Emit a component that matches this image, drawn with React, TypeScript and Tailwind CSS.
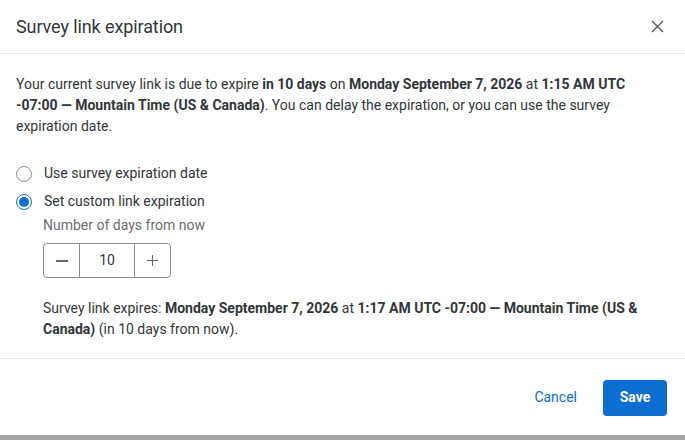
import React, { useState } from "react";

export default function App() {
  const [mode, setMode] = useState<"survey" | "custom">("custom");
  const [days, setDays] = useState(10);

  return (
    <div
      className="w-[685px] h-[440px] bg-white flex flex-col text-[#32363a]"
      style={{ fontFamily: "Roboto, 'Liberation Sans', sans-serif" }}
    >
      {/* Header */}
      <div className="h-[54px] shrink-0 flex items-center justify-between pl-4 pr-[20px] border-b border-[#e6e6e6]">
        <h2 className="text-[18px] text-[#32363a] font-normal tracking-[-0.1px]">Survey link expiration</h2>
        <button className="w-4 h-4 flex items-center justify-center text-[#555]">
          <svg width="13" height="13" viewBox="0 0 13 13" fill="none">
            <path d="M1 1L12 12M12 1L1 12" stroke="currentColor" strokeWidth="1.3" />
          </svg>
        </button>
      </div>

      {/* Body */}
      <div className="flex-1 px-4 pt-[20px] text-[14px] leading-[21px]">
        <p>
          Your current survey link is due to expire <b>in 10 days</b> on <b>Monday September 7, 2026</b> at{" "}
          <b>1:15 AM UTC -07:00 — Mountain Time (US &amp; Canada)</b>. You can delay the expiration, or you can use the
          survey expiration date.
        </p>

        <div className="mt-[26px] flex flex-col gap-[7px]">
          <label className="flex items-center gap-3 h-[21px] cursor-pointer" onClick={() => setMode("survey")}>
            <span className="w-4 h-4 rounded-full border border-[#8c8c8c] flex items-center justify-center bg-white">
              {mode === "survey" && <span className="w-[10px] h-[10px] rounded-full bg-[#0b6ed0]" />}
            </span>
            <span>Use survey expiration date</span>
          </label>
          <label className="flex items-center gap-3 h-[21px] cursor-pointer" onClick={() => setMode("custom")}>
            <span
              className={`w-4 h-4 rounded-full border flex items-center justify-center bg-white ${
                mode === "custom" ? "border-[#0b6ed0]" : "border-[#8c8c8c]"
              }`}
            >
              {mode === "custom" && <span className="w-[10px] h-[10px] rounded-full bg-[#0b6ed0]" />}
            </span>
            <span>Set custom link expiration</span>
          </label>
        </div>

        <div className="pl-[27px]">
          <div className="mt-[3px] text-[#6a6d70]">Number of days from now</div>

          <div className="mt-[7px] inline-flex h-[35px] border border-[#8c8c8c] rounded-[4px] overflow-hidden">
            <button
              className="w-[36px] flex items-center justify-center border-r border-[#8c8c8c] text-[#32363a]"
              onClick={() => setDays(Math.max(0, days - 1))}
            >
              <svg width="14" height="14" viewBox="0 0 14 14">
                <path d="M1 7H13" stroke="currentColor" strokeWidth="1.5" />
              </svg>
            </button>
            <div className="w-[54px] flex items-center justify-center text-[14px]">{days}</div>
            <button
              className="w-[36px] flex items-center justify-center border-l border-[#8c8c8c] text-[#6a6d70]"
              onClick={() => setDays(days + 1)}
            >
              <svg width="13" height="13" viewBox="0 0 13 13">
                <path d="M6.5 1V12M1 6.5H12" stroke="currentColor" strokeWidth="1.2" />
              </svg>
            </button>
          </div>

          <p className="mt-[20px]">
            Survey link expires: <b>Monday September 7, 2026</b> at{" "}
            <b>1:17 AM UTC -07:00 — Mountain Time (US &amp; Canada)</b> (in 10 days from now).
          </p>
        </div>
      </div>

      {/* Footer */}
      <div className="h-[77px] shrink-0 border-t border-[#e6e6e6] flex items-center justify-end gap-[10px] pr-[18px] pt-[1px]">
        <button className="h-[36px] px-4 text-[14px] text-[#0b6ed0]">Cancel</button>
        <button className="h-[36px] w-[64px] rounded-[4px] bg-[#0b6ed0] text-white text-[14px] font-bold">Save</button>
      </div>
      <div className="h-[5px] shrink-0 bg-[#a5a5a5]" />
    </div>
  );
}
